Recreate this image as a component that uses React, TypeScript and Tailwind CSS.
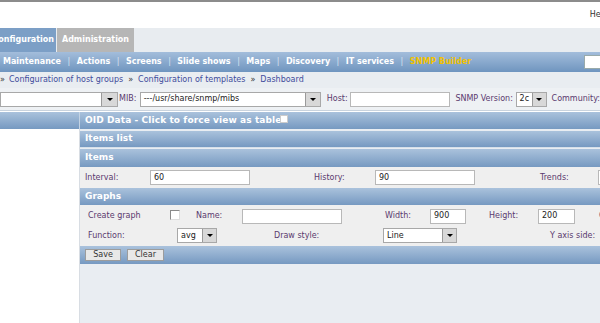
import React from "react";

const FONT = { fontFamily: '"DejaVu Sans", Verdana, sans-serif' };

const hdr = "bg-[linear-gradient(#aac2dc,#7699c1)] text-white font-bold text-[9px] flex items-center";

function Arrow({ w = 15 }: { w?: number }) {
  return (
    <span
      className="h-full flex items-center justify-center bg-[#d8d8d8] border-l border-[#9a9a9a] shrink-0"
      style={{ width: w }}
    >
      <span className="w-0 h-0 border-l-[3px] border-r-[3px] border-t-[3px] border-l-transparent border-r-transparent border-t-black" />
    </span>
  );
}

function Select({ w, value, arrowW }: { w: number; value: string; arrowW?: number }) {
  return (
    <div
      className="h-[15px] bg-white border border-[#a8a8a8] flex items-center shrink-0"
      style={{ width: w }}
    >
      <span className="flex-1 pl-[3px] text-[8px] text-[#222] truncate">{value}</span>
      <Arrow w={arrowW} />
    </div>
  );
}

function Input({ w, value = "" }: { w: number; value?: string }) {
  return (
    <div
      className="h-[15px] bg-white border border-[#b8b8b8] flex items-center pl-[3px] text-[8px] text-[#222] shrink-0"
      style={{ width: w }}
    >
      {value}
    </div>
  );
}

function Label({ w, children }: { w: number; children: React.ReactNode }) {
  return (
    <span className="text-[8px] text-[#5a3a6e] shrink-0 whitespace-nowrap" style={{ width: w }}>
      {children}
    </span>
  );
}

const navItems = ["Maintenance", "Actions", "Screens", "Slide shows", "Maps", "Discovery", "IT services"];

export default function App() {
  return (
    <div className="w-[600px] h-[323px] overflow-hidden bg-white flex flex-col" style={FONT}>
      {/* top */}
      <div className="h-[28px] border-t-2 border-[#8c8c8c] flex justify-end items-center shrink-0">
        <span className="text-[8px] text-[#333] whitespace-nowrap -mr-[8px]">Help</span>
      </div>

      {/* tabs */}
      <div className="h-[24px] bg-[#e8ecf0] flex items-stretch shrink-0">
        <div className="w-[56px] bg-[#7c9fc6] text-white text-[8px] font-bold flex items-center justify-end pr-[2px] overflow-hidden whitespace-nowrap">
          Configuration
        </div>
        <div className="ml-[1px] w-[77px] bg-[#b6b6b6] text-white text-[8px] font-bold flex items-center justify-center whitespace-nowrap">
          Administration
        </div>
      </div>

      {/* nav */}
      <div className="h-[20px] bg-[linear-gradient(#a3bddb,#6f95bf)] flex items-center shrink-0 text-[8px] font-bold whitespace-nowrap">
        <div className="flex items-center pl-[3px]">
          {navItems.map((n) => (
            <React.Fragment key={n}>
              <span className="text-white">{n}</span>
              <span className="text-[#d7e2ef] font-normal px-[6.5px]">|</span>
            </React.Fragment>
          ))}
          <span className="text-[#f2c200]">SNMP Builder</span>
        </div>
        <div className="ml-auto w-[17px] h-[14px] bg-white border border-[#9aa] -mr-[1px]" />
      </div>

      {/* breadcrumb */}
      <div className="h-[16px] bg-[#e9edf1] flex items-center text-[8px] text-[#3f4c9c] whitespace-nowrap shrink-0">
        <span className="text-[#333]">»</span>
        <span className="pl-[4px]">Configuration of host groups</span>
        <span className="text-[#333] px-[5px]">»</span>
        <span>Configuration of templates</span>
        <span className="text-[#333] px-[5px]">»</span>
        <span>Dashboard</span>
      </div>

      {/* form row */}
      <div className="h-[23px] bg-[#eef1f4] border-b border-[#c9d3de] flex items-center whitespace-nowrap shrink-0">
        <Select w={118} value="" arrowW={16} />
        <span className="pl-[1px] w-[22px] text-[8px] text-[#5a3a6e]">MIB:</span>
        <Select w={181} value="---/usr/share/snmp/mibs" />
        <span className="pl-[6px] w-[30px] text-[8px] text-[#5a3a6e]">Host:</span>
        <Input w={100} />
        <span className="pl-[5px] w-[66px] text-[8px] text-[#5a3a6e]">SNMP Version:</span>
        <Select w={31} value="2c" arrowW={14} />
        <span className="pl-[5px] text-[8px] text-[#5a3a6e]">Community:</span>
      </div>

      {/* OID header */}
      <div className={`h-[17px] mt-[1px] ${hdr} shrink-0`}>
        <div className="w-[80px] h-full border-r border-[#c3d3e4]" />
        <span className="pl-[5px] whitespace-nowrap tracking-[0.1px]">OID Data - Click to force view as table</span>
        <span className="w-[8px] h-[8px] bg-white border border-[#ccc] -ml-[1px] -mt-[4px]" />
      </div>

      {/* body */}
      <div className="flex-1 flex min-h-0">
        <div className="w-[80px] bg-white border-r border-[#d8dde3] shrink-0" />
        <div className="flex-1 flex flex-col bg-[#e9edf2] pt-[2px]">
          <div className={`h-[17px] ${hdr} pl-[5px] border-b border-[#d6e0ea]`}>Items list</div>
          <div className={`h-[18px] mt-[1px] ${hdr} pl-[5px]`}>Items</div>

          <div className="h-[21px] bg-[#efefef] flex items-center pl-[5px] whitespace-nowrap">
            <Label w={65}>Interval:</Label>
            <Input w={100} value="60" />
            <span className="w-[64px] shrink-0" />
            <Label w={61}>History:</Label>
            <Input w={100} value="90" />
            <span className="w-[65px] shrink-0" />
            <Label w={58}>Trends:</Label>
            <Input w={40} />
          </div>

          <div className={`h-[17px] ${hdr} pl-[5px]`}>Graphs</div>

          <div className="bg-[#efefef] flex flex-col pl-[8px] pt-[2px] whitespace-nowrap">
            <div className="h-[18px] flex items-center">
              <Label w={82}>Create graph</Label>
              <span className="w-[10px] h-[10px] bg-white border border-[#8a8a8a] border-r-[#ddd] border-b-[#ddd] shrink-0 -mt-[3px]" />
              <span className="w-[16px] shrink-0" />
              <Label w={46}>Name:</Label>
              <Input w={100} />
              <span className="w-[43px] shrink-0" />
              <Label w={45}>Width:</Label>
              <Input w={36} value="900" />
              <span className="w-[23px] shrink-0" />
              <Label w={49}>Height:</Label>
              <Input w={37} value="200" />
              <span className="w-[24px] shrink-0" />
              <Label w={20}>Graph type:</Label>
            </div>
            <div className="h-[21px] flex items-center">
              <Label w={89}>Function:</Label>
              <Select w={40} value="avg" arrowW={14} />
              <span className="w-[57px] shrink-0" />
              <Label w={109}>Draw style:</Label>
              <Select w={74} value="Line" arrowW={14} />
              <span className="w-[93px] shrink-0" />
              <Label w={60}>Y axis side:</Label>
            </div>
          </div>

          <div className={`h-[18px] ${hdr} pl-[5px] gap-[6px]`}>
            <span className="w-[36px] h-[12px] bg-[#e8e8e8] border border-[#9c9c9c] text-[#333] font-normal text-[8px] flex items-center justify-center">
              Save
            </span>
            <span className="w-[37px] h-[12px] bg-[#e8e8e8] border border-[#9c9c9c] text-[#333] font-normal text-[8px] flex items-center justify-center">
              Clear
            </span>
          </div>
          <div className="flex-1 bg-[#e9edf2]" />
        </div>
      </div>
    </div>
  );
}
